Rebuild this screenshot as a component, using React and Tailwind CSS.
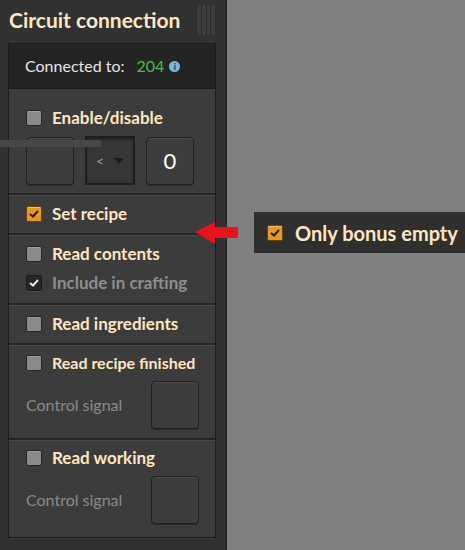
const font = { fontFamily: 'Lato, "Open Sans", sans-serif' };

function Check({ state = 'off' }) {
  if (state === 'on') {
    return (
      <div className="w-4 h-4 shrink-0 rounded-[2px] bg-[#e39a2a] border border-[#6b4310] shadow-[inset_0_1px_0_#f7c060] flex items-center justify-center">
        <svg width="10" height="8" viewBox="0 0 10 8"><path d="M1 4 L4 6.5 L9 1" stroke="#2a1a05" strokeWidth="2" fill="none" /></svg>
      </div>
    );
  }
  if (state === 'dim') {
    return (
      <div className="w-4 h-4 shrink-0 rounded-[2px] bg-[#262626] border border-[#1a1a1a] shadow-[0_1px_0_#4a4a4a] flex items-center justify-center">
        <svg width="10" height="8" viewBox="0 0 10 8"><path d="M1 4 L4 6.5 L9 1" stroke="#e8e8e8" strokeWidth="2" fill="none" /></svg>
      </div>
    );
  }
  return <div className="w-4 h-4 shrink-0 rounded-[2px] bg-[#8a8a8a] border border-[#262626] shadow-[inset_0_1px_0_#9c9c9c]" />;
}

function Slot({ children }) {
  return (
    <div className="w-12 h-12 shrink-0 rounded-[4px] bg-[#3d3d3d] border border-[#202020] shadow-[inset_0_1px_0_#4c4c4c,0_1px_0_#2a2a2a] flex items-center justify-center">
      {children}
    </div>
  );
}

function Row({ state, label, muted, h = 'h-[38px]', size = 'text-[17px]' }) {
  return (
    <div className={`flex items-center gap-[10px] ${h}`}>
      <Check state={state} />
      <span className={`${size} font-bold whitespace-nowrap ${muted ? 'text-[#8e8e8e]' : 'text-[#ffe6c0]'}`}>{label}</span>
    </div>
  );
}

function Section({ children, className = '' }) {
  return (
    <div className={`px-[17px] border-t-2 border-[#252525] shadow-[inset_0_1px_0_#4a4a4a] ${className}`}>{children}</div>
  );
}

function SignalRow() {
  return (
    <div className="flex items-center justify-between pr-[16px] -mr-[17px]">
      <span className="text-[16px] text-[#8a8a8a]">Control signal</span>
      <Slot />
    </div>
  );
}

export default function App() {
  return (
    <div className="w-[465px] h-[550px] flex bg-[#808080] relative overflow-hidden" style={font}>
      <div className="w-[227px] h-[550px] shrink-0 bg-[#313131] border-r border-[#242424] flex flex-col pl-[8px] pr-[10px] pb-[12px]">
        <div className="h-[43px] flex items-start justify-between">
          <h1 className="text-[21px] font-bold text-[#ffe6c0] leading-none pt-[9px] pl-[1px]">Circuit connection</h1>
          <div className="mt-[5px] w-5 h-[30px] flex gap-[1px] px-[1px] bg-[#2c2c2c]">
            <div className="flex-1 bg-[#3d3d3d]" />
            <div className="flex-1 bg-[#3d3d3d]" />
            <div className="flex-1 bg-[#3d3d3d]" />
            <div className="flex-1 bg-[#3d3d3d]" />
          </div>
        </div>
        <div className="flex-1 flex flex-col bg-[#3c3c3c] border border-[#1c1c1c] shadow-[0_1px_0_#3a3a3a]">
          <div className="h-[45px] bg-[#242424] border-b border-[#1a1a1a] flex items-center pl-[16px] gap-[12px] text-[16px]">
            <span className="text-[#e4e4e4]">Connected to:</span>
            <span className="text-[#44c044] flex items-center gap-[5px]">
              204
              <span className="w-[11px] h-[11px] rounded-full bg-[#79b6e0] flex items-center justify-center text-[9px] font-bold text-[#1d3a52] leading-none">i</span>
            </span>
          </div>
          <div className="px-[17px] pt-[11px] pb-[8px]">
            <Row state="off" label="Enable/disable" h="h-[36px]" />
            <div className="flex items-center gap-[11px]">
              <Slot />
              <div className="w-[50px] h-[49px] bg-[#363636] border-2 border-[#1e1e1e] shadow-[inset_0_2px_2px_#262626] flex items-center justify-center gap-[10px] text-[#a0a0a0] text-[14px]">
                <span>&lt;</span>
                <svg width="10" height="6" viewBox="0 0 10 6"><path d="M0 0 H10 L5 6 Z" fill="#1c1c1c" /></svg>
              </div>
              <Slot><span className="text-white text-[22px] leading-none">0</span></Slot>
            </div>
          </div>
          <Section>
            <Row state="on" label="Set recipe" />
          </Section>
          <Section className="pb-[10px]">
            <Row state="off" label="Read contents" />
            <Row state="dim" label="Include in crafting" muted h="h-[20px]" />
          </Section>
          <Section>
            <Row state="off" label="Read ingredients" />
          </Section>
          <Section className="pb-[9px]">
            <Row state="off" label="Read recipe finished" h="h-[36px]" size="text-[16px]" />
            <SignalRow />
          </Section>
          <Section className="flex-1">
            <Row state="off" label="Read working" h="h-[36px]" />
            <SignalRow />
          </Section>
        </div>
      </div>

      <div className="absolute left-0 top-[140px] w-[101px] h-[7px] bg-[#474747]" />

      <svg className="absolute left-[195px] top-[221px]" width="44" height="24" viewBox="0 0 44 24">
        <path d="M0 11 L20 1 L20 6 L43 6 L43 17 L20 17 L20 23 Z" fill="#e8141c" />
      </svg>

      <div className="pl-[27px] pt-[212px]">
        <div className="w-[211px] h-[41px] bg-[#2f2f2f] flex items-center pl-[13px] gap-[12px]">
          <Check state="on" />
          <span className="text-[20px] font-bold text-[#ffe6c0] whitespace-nowrap">Only bonus empty</span>
        </div>
      </div>
    </div>
  );
}
